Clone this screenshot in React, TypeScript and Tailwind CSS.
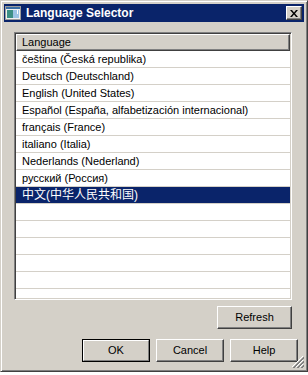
import { clsx } from "clsx";

const languages = [
  "čeština (Česká republika)",
  "Deutsch (Deutschland)",
  "English (United States)",
  "Español (España, alfabetización internacional)",
  "français (France)",
  "italiano (Italia)",
  "Nederlands (Nederland)",
  "русский (Россия)",
  "中文(中华人民共和国)",
];

const SELECTED = 8;
const EMPTY_ROWS = 6;

function Button({ label, isDefault, className }: { label: string; isDefault?: boolean; className?: string }) {
  if (isDefault) {
    return (
      <div className={clsx("h-[23px] border border-black", className)}>
        <div className="h-full w-full border border-t-white border-l-white border-r-[#808080] border-b-[#808080] bg-[#d4d0c8] flex items-center justify-center text-[11px] text-black">
          {label}
        </div>
      </div>
    );
  }
  return (
    <div
      className={clsx(
        "h-[23px] border border-t-white border-l-white border-r-[#404040] border-b-[#404040] shadow-[inset_-1px_-1px_0_#808080] bg-[#d4d0c8] flex items-center justify-center text-[11px] text-black",
        className
      )}
    >
      {label}
    </div>
  );
}

function TitleIcon() {
  return (
    <svg width="16" height="16" viewBox="0 0 16 16" className="shrink-0">
      <rect x="0.5" y="1.5" width="15" height="13" fill="#f0f0f0" stroke="#9c9c9c" />
      <rect x="1" y="2" width="14" height="2" fill="#3a6ea5" />
      <rect x="2" y="5" width="6" height="8" fill="#3c8f84" />
      <rect x="8" y="5" width="6" height="8" fill="#9cc4e4" />
      <rect x="12" y="5" width="1" height="4" fill="#ffffff" />
    </svg>
  );
}

function CloseButton() {
  return (
    <div className="w-[16px] h-[14px] mr-[2px] border border-t-white border-l-white border-r-[#404040] border-b-[#404040] shadow-[inset_-1px_-1px_0_#808080] bg-[#d4d0c8] flex items-center justify-center">
      <svg width="8" height="7" viewBox="0 0 8 7">
        <path d="M0 0h2l2 2.5 2-2.5h2l-3 3.5 3 3.5h-2l-2-2.5-2 2.5h-2l3-3.5z" fill="#000" />
      </svg>
    </div>
  );
}

function Grip() {
  return (
    <svg width="12" height="12" viewBox="0 0 12 12" className="absolute right-[3px] bottom-[3px]">
      <path d="M11 0L0 11M11 4L4 11M11 8L8 11" stroke="#ffffff" strokeWidth="1" />
      <path d="M12 1L1 12M12 2L2 12M12 5L5 12M12 6L6 12M12 9L9 12M12 10L10 12" stroke="#808080" strokeWidth="1" />
    </svg>
  );
}

export default function App() {
  return (
    <div className="w-[308px] h-[375px] bg-white" style={{ fontFamily: '"Liberation Sans", Arial, "Noto Sans CJK SC", sans-serif' }}>
      <div className="relative w-[308px] h-[372px] bg-[#d4d0c8] border border-t-[#d4d0c8] border-l-[#d4d0c8] border-r-[#404040] border-b-[#404040] shadow-[inset_1px_1px_0_#ffffff,inset_-1px_-1px_0_#808080] p-[3px] flex flex-col">
        {/* title bar */}
        <div className="h-[18px] bg-[#0a246a] flex items-center pl-[1px] shrink-0">
          <TitleIcon />
          <span className="ml-[5px] text-white font-bold text-[12px] leading-none flex-1">Language Selector</span>
          <CloseButton />
        </div>

        <div className="flex flex-col pl-[10px] pt-[10px]">
          {/* list */}
          <div className="w-[278px] h-[268px] border border-t-[#808080] border-l-[#808080] border-r-white border-b-white shadow-[inset_1px_1px_0_#404040,inset_-1px_-1px_0_#d4d0c8] p-[1px] bg-white overflow-hidden">
            <div className="h-[17px] border border-t-white border-l-white border-r-[#404040] border-b-[#404040] shadow-[inset_-1px_-1px_0_#808080] bg-[#d4d0c8] flex items-center pl-[5px] text-[11px] text-black">
              Language
            </div>
            {languages.map((lang, i) => (
              <div
                key={lang}
                className={clsx(
                  "h-[17px] flex items-center pl-[6px] border-b border-[#d4d0c8]",
                  i === SELECTED ? "bg-[#0a246a] text-white border-[#0a246a] text-[12px]" : "text-black text-[11px]"
                )}
              >
                {lang}
              </div>
            ))}
            {Array.from({ length: EMPTY_ROWS }).map((_, i) => (
              <div key={i} className="h-[17px] border-b border-[#d4d0c8]" />
            ))}
          </div>

          {/* refresh */}
          <div className="w-[278px] flex justify-end mt-[6px]">
            <Button label="Refresh" className="w-[75px]" />
          </div>
        </div>

        {/* dialog buttons */}
        <div className="flex justify-end gap-[6px] mt-[10px] pr-[6px]">
          <Button label="OK" isDefault className="w-[68px]" />
          <Button label="Cancel" className="w-[68px]" />
          <Button label="Help" className="w-[68px]" />
        </div>

        <Grip />
      </div>
    </div>
  );
}
